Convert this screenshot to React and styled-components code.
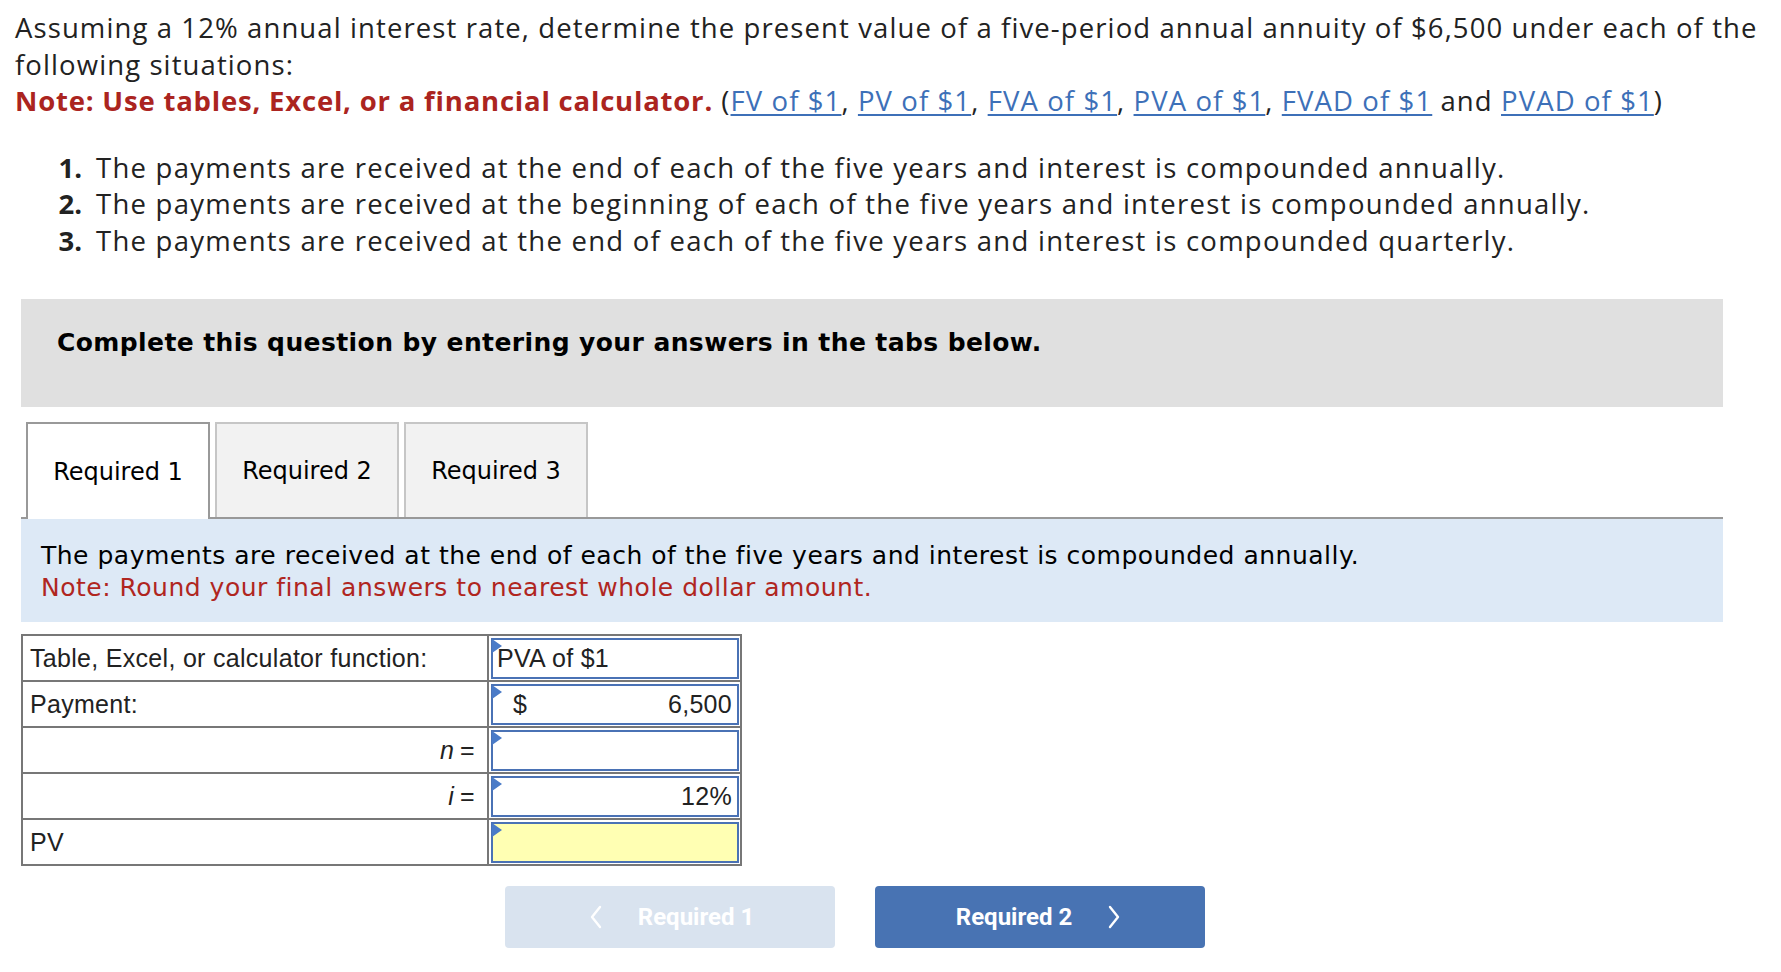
import React from "react";
import styled, { createGlobalStyle } from "styled-components";

const Global = createGlobalStyle`
  html, body {
    margin: 0;
    padding: 0;
    background: #fff;
  }
  body {
    font-family: "Open Sans", Lato, sans-serif;
    color: #222;
  }
`;

const Page = styled.div`
  padding: 10px 0 40px 15px;
  width: 1766px;
  box-sizing: border-box;
`;

const Intro = styled.p`
  margin: 0;
  font-size: 27.5px;
  letter-spacing: 1.1px;
  line-height: 36.5px;
  color: #222;
`;

const NoteRed = styled.span`
  color: #ab2420;
  font-weight: 700;
  letter-spacing: 0.8px;
`;

const Link = styled.a`
  color: #3d70b8;
  text-decoration: underline;
  text-underline-offset: 3px;
  cursor: pointer;
`;

const List = styled.ol`
  margin: 30px 0 0 0;
  padding: 0;
  list-style: none;
`;

const Item = styled.li`
  display: flex;
  font-size: 27.5px;
  letter-spacing: 1.25px;
  line-height: 36.5px;
  color: #222;
`;

const Num = styled.span`
  width: 81px;
  padding-right: 14px;
  text-align: right;
  font-weight: 700;
  letter-spacing: 0;
  box-sizing: border-box;
`;

const Card = styled.div`
  margin: 40px 0 0 6px;
  width: 1702px;
`;

const Banner = styled.div`
  height: 108px;
  box-sizing: border-box;
  background: #e0e0e0;
  padding: 29px 0 0 36px;
  font-family: "DejaVu Sans", Verdana, sans-serif;
  font-weight: 700;
  font-size: 25px;
  letter-spacing: 0.4px;
  line-height: 30px;
  color: #000;
`;

const Tabs = styled.div`
  display: flex;
  gap: 5px;
  margin-top: 15px;
  padding-left: 5px;
  border-bottom: 2px solid #999;
`;

const Tab = styled.button`
  width: 184px;
  box-sizing: border-box;
  margin-bottom: ${(p) => (p.$active ? "-2px" : "0")};
  height: ${(p) => (p.$active ? "97px" : "95px")};
  padding: 0;
  border: 2px solid ${(p) => (p.$active ? "#999" : "#c6c6c6")};
  border-bottom: none;
  background: ${(p) => (p.$active ? "#fff" : "#f2f2f2")};
  font-family: "DejaVu Sans", Verdana, sans-serif;
  font-size: 24px;
  color: #000;
  cursor: pointer;
`;

const Info = styled.div`
  height: 103px;
  box-sizing: border-box;
  background: #dde9f6;
  padding: 21px 0 0 20px;
  font-family: "DejaVu Sans", Verdana, sans-serif;
  font-size: 25px;
  letter-spacing: 0.5px;
  line-height: 32px;
  color: #000;
`;

const InfoNote = styled.div`
  color: #b0261f;
`;

const Grid = styled.div`
  margin-top: 12px;
  width: 717px;
  border: 2px solid #777;
  border-bottom: none;
  font-family: "Liberation Sans", Arial, sans-serif;
  font-size: 25px;
  letter-spacing: 0.3px;
  color: #222;
`;

const Row = styled.div`
  display: grid;
  grid-template-columns: 466px 1fr;
  height: 46px;
  box-sizing: border-box;
  border-bottom: 2px solid #777;
`;

const Label = styled.div`
  display: flex;
  align-items: center;
  justify-content: ${(p) => (p.$right ? "flex-end" : "flex-start")};
  padding: 0 12px 0 7px;
  border-right: 2px solid #777;
  em {
    font-style: italic;
    margin-right: 6px;
  }
`;

const Field = styled.div`
  position: relative;
  margin: 2px 1px 1px 2px;
  display: flex;
  align-items: center;
  justify-content: ${(p) => (p.$left ? "flex-start" : "space-between")};
  padding: 0 5px 0 ${(p) => (p.$left ? "4px" : "20px")};
  border: 2px solid #4a72b5;
  background: ${(p) => (p.$yellow ? "#ffffb3" : "#fff")};
`;

const Marker = styled.span`
  position: absolute;
  left: -1px;
  top: -1px;
  width: 0;
  height: 0;
  border-top: 7px solid transparent;
  border-bottom: 7px solid transparent;
  border-left: 10px solid #4a7bc8;
`;

const Nav = styled.div`
  display: flex;
  gap: 40px;
  margin: 20px 0 0 484px;
`;

const NavButton = styled.button`
  width: 330px;
  height: 62px;
  display: flex;
  align-items: center;
  justify-content: center;
  gap: 32px;
  border: none;
  border-radius: 4px;
  background: ${(p) => (p.$disabled ? "#d9e3ef" : "#4873b3")};
  color: #fff;
  font-family: Roboto, "Liberation Sans", sans-serif;
  font-weight: 700;
  font-size: 24px;
  cursor: ${(p) => (p.$disabled ? "default" : "pointer")};
  svg {
    width: 20px;
    height: 26px;
  }
`;

const Chevron = ({ dir }) => (
  <svg viewBox="0 0 20 26" fill="none" stroke="#fff" strokeWidth="2.4" strokeLinecap="round" strokeLinejoin="round">
    {dir === "left" ? <path d="M14 3 L6 13 L14 23" /> : <path d="M6 3 L14 13 L6 23" />}
  </svg>
);

const links = ["FV of $1", "PV of $1", "FVA of $1", "PVA of $1", "FVAD of $1"];

export default function App() {
  return (
    <>
      <Global />
      <Page>
        <Intro>
          Assuming a 12% annual interest rate, determine the present value of a five-period annual annuity of $6,500 under each of the
          <br />
          following situations:
          <br />
          <NoteRed>Note: Use tables, Excel, or a financial calculator.</NoteRed> (
          {links.map((l, i) => (
            <React.Fragment key={l}>
              <Link>{l}</Link>
              {i < links.length - 1 ? ", " : " and "}
            </React.Fragment>
          ))}
          <Link>PVAD of $1</Link>)
        </Intro>

        <List>
          <Item><Num>1.</Num>The payments are received at the end of each of the five years and interest is compounded annually.</Item>
          <Item><Num>2.</Num>The payments are received at the beginning of each of the five years and interest is compounded annually.</Item>
          <Item><Num>3.</Num>The payments are received at the end of each of the five years and interest is compounded quarterly.</Item>
        </List>

        <Card>
          <Banner>Complete this question by entering your answers in the tabs below.</Banner>
          <Tabs>
            <Tab $active>Required 1</Tab>
            <Tab>Required 2</Tab>
            <Tab>Required 3</Tab>
          </Tabs>
          <Info>
            <div>The payments are received at the end of each of the five years and interest is compounded annually.</div>
            <InfoNote>Note: Round your final answers to nearest whole dollar amount.</InfoNote>
          </Info>

          <Grid>
            <Row>
              <Label>Table, Excel, or calculator function:</Label>
              <Field $left><Marker />PVA of $1</Field>
            </Row>
            <Row>
              <Label>Payment:</Label>
              <Field><Marker /><span>$</span><span>6,500</span></Field>
            </Row>
            <Row>
              <Label $right><em>n</em>=</Label>
              <Field><Marker /></Field>
            </Row>
            <Row>
              <Label $right><em>i</em>=</Label>
              <Field><Marker /><span /><span>12%</span></Field>
            </Row>
            <Row>
              <Label>PV</Label>
              <Field $yellow><Marker /></Field>
            </Row>
          </Grid>

          <Nav>
            <NavButton $disabled><Chevron dir="left" />Required 1</NavButton>
            <NavButton>Required 2<Chevron dir="right" /></NavButton>
          </Nav>
        </Card>
      </Page>
    </>
  );
}
